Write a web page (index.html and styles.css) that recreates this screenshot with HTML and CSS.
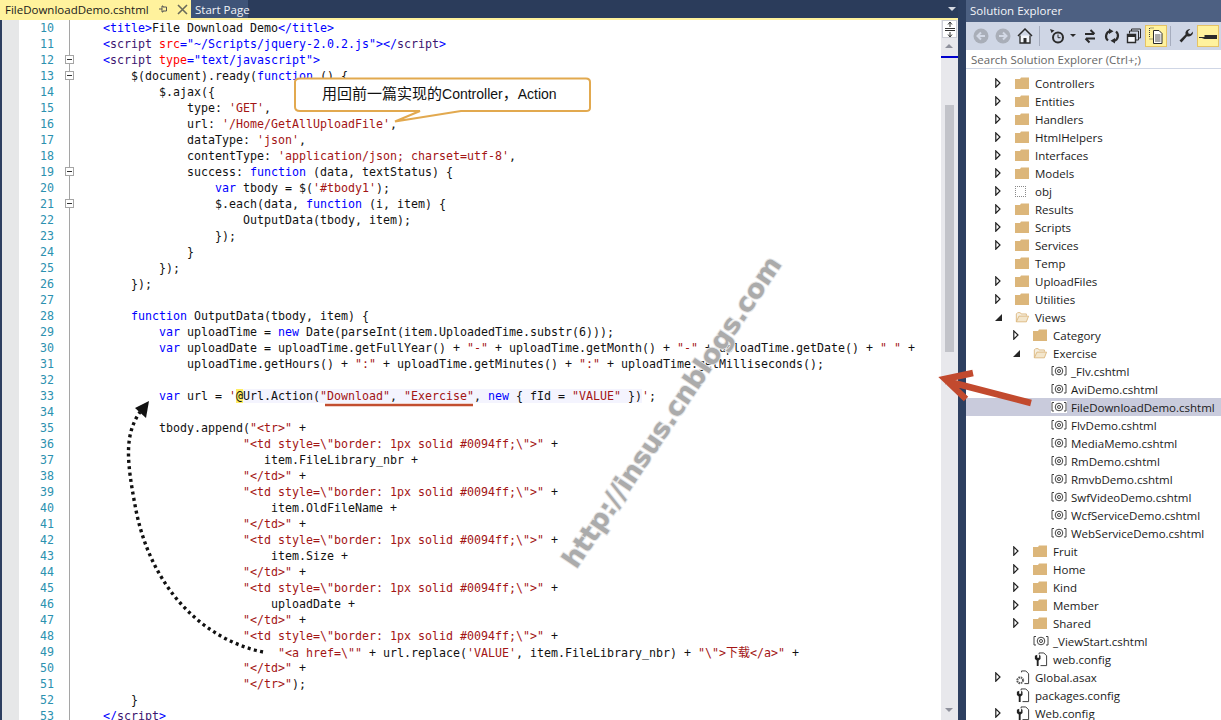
FILE: index.html
```html
<!DOCTYPE html>
<html lang="en">
<head>
<meta charset="utf-8">
<title>FileDownloadDemo.cshtml</title>
<link rel="stylesheet" href="styles.css">
</head>
<body>
<svg class="defs" aria-hidden="true">
  <symbol id="i-folder" viewBox="0 0 14 12"><path d="M0 2h5l1-1.500h8V12H0z" fill="#dcb67a"/></symbol>
  <symbol id="i-open" viewBox="0 0 16 12"><path d="M1.500 11.500V2.500L3 1h3l1 1.500h6v2" fill="#f6efe0" stroke="#dcb67a"/><path d="M1.500 11.500L4.500 5H15.500l-2.500 6.500z" fill="#f3e6cc" stroke="#dcb67a"/></symbol>
  <symbol id="i-closed" viewBox="0 0 6 10"><path d="M.8.800L5 5 .8 9.200z" fill="#fff" stroke="#1e1e1e" stroke-width="1.200"/></symbol>
  <symbol id="i-expanded" viewBox="0 0 7 7"><path d="M7 0v7H0z" fill="#262626"/></symbol>
  <symbol id="i-razor" viewBox="0 0 16 12"><path d="M3 1.500H1v8.500h2M13 1.500h2v8.500h-2" fill="none" stroke="#444"/><circle cx="8" cy="6" r="3.800" fill="none" stroke="#444"/><circle cx="8" cy="6" r="1.500" fill="none" stroke="#444"/></symbol>
  <symbol id="i-config" viewBox="0 0 16 16"><path d="M6.500 2.500V1h5l3 3v10.500H8" fill="#fff" stroke="#333"/><path d="M2 4v3.500L4 9v6h2V9l2-1.500V4L6.500 3v3h-2V3z" fill="#222"/></symbol>
  <symbol id="i-asax" viewBox="0 0 16 16"><path d="M7 2.500V1h4.500l3 3v10.500H10" fill="#fff" stroke="#333"/><circle cx="5.500" cy="11" r="3" fill="none" stroke="#555" stroke-width="2" stroke-dasharray="1.600 .8"/><circle cx="5.500" cy="11" r="3.800" fill="none" stroke="#777" stroke-width=".8" stroke-dasharray="1.300 1.700"/></symbol>
  <symbol id="i-back" viewBox="0 0 16 16"><circle cx="8" cy="8" r="7.500" fill="#a9aeb8"/><path d="M12 8H5M8 4.500L4.500 8 8 11.500" fill="none" stroke="#d3d9e6" stroke-width="2"/></symbol>
  <symbol id="i-forward" viewBox="0 0 16 16"><circle cx="8" cy="8" r="7.500" fill="#a9aeb8"/><path d="M4 8h7M8 4.500L11.500 8 8 11.500" fill="none" stroke="#d3d9e6" stroke-width="2"/></symbol>
  <symbol id="i-home" viewBox="0 0 16 16"><path d="M1 8l7-7 7 7" fill="none" stroke="#2b2b2b" stroke-width="1.500"/><path d="M3 7.500V15h10V7.500" fill="#f4f6fa" stroke="#2b2b2b" stroke-width="1.300"/><path d="M6.500 15v-5h3v5z" fill="#2b2b2b"/></symbol>
  <symbol id="i-history" viewBox="0 0 16 16"><path d="M1 1l4.500 1.500L2.500 5z" fill="#2b2b2b"/><circle cx="9" cy="9.500" r="5" fill="none" stroke="#2b2b2b" stroke-width="2"/><path d="M9 6.500v3.200h2.500" fill="none" stroke="#2b2b2b"/></symbol>
  <symbol id="i-sync" viewBox="0 0 16 16"><path d="M3 6h9M8.500 2l4 4" fill="none" stroke="#2b2b2b" stroke-width="2"/><path d="M13 10.500H4M7.500 14.500l-4-4" fill="none" stroke="#2b2b2b" stroke-width="2"/></symbol>
  <symbol id="i-refresh" viewBox="0 0 16 16"><path d="M4 12.500A5.500 5.500 0 0 1 6 3M12 3.500a5.500 5.500 0 0 1-2 9.500" fill="none" stroke="#2b2b2b" stroke-width="2.200"/><path d="M5 .5l4.500 2.700L5 6zM11 15.500L6.500 12.800 11 10z" fill="#2b2b2b"/></symbol>
  <symbol id="i-collapse" viewBox="0 0 16 16"><path d="M5.500 3.500V1h9v9h-2.500" fill="none" stroke="#2b2b2b"/><path d="M3.500 5.500V3h9v9h-2.500" fill="#cfd6e5" stroke="#2b2b2b"/><path d="M1.500 6.500h8v8h-8z" fill="#f4f6fa" stroke="#2b2b2b" stroke-width="1.400"/><path d="M2 8h7" stroke="#2b2b2b" stroke-width="2"/></symbol>
  <symbol id="i-showall" viewBox="0 0 16 18"><path d="M1.500 1v10" stroke="#444" stroke-dasharray="1 1"/><path d="M5.500 1h-4M4.500 12H1.500" stroke="#444" stroke-dasharray="1 1"/><path d="M5.500 3.500H11l3 3v10H5.500z" fill="#fff" stroke="#2b2b2b"/><path d="M7 8h5.500M7 10h5.500M7 12h5.500M7 14h5.500" stroke="#555"/></symbol>
  <symbol id="i-wrench" viewBox="0 0 16 16"><path d="M15 3.500a4.500 4.500 0 0 1-6 4.800L3.500 14.500 1.500 12.500l6-6a4.500 4.500 0 0 1 4.800-5.500L10 3.500l.5 2 2 .5z" fill="#2b2b2b"/></symbol>
  <symbol id="i-pin" viewBox="0 0 20 10"><path d="M1 6h5.500V4H19v4H6.500" fill="#2b2b2b"/><path d="M1 6.500h18" stroke="#2b2b2b"/></symbol>
  <symbol id="i-tabpin" viewBox="0 0 10 10"><path d="M1 5h3M4 2v6h1V7h3.500V3H5V2z" fill="none" stroke="#555"/></symbol>
  <symbol id="i-tabx" viewBox="0 0 11 11"><path d="M1 1l9 9M10 1l-9 9" stroke="#6b6b5a" stroke-width="1.600"/></symbol>
  <symbol id="i-split" viewBox="0 0 12 16"><path d="M1 7.500h10M1 9.500h10" stroke="#333"/><path d="M6 1v5M6 16v-5" stroke="#333"/><path d="M4 3.500L6 1l2 2.500M4 13.500L6 16l2-2.500" fill="none" stroke="#333"/></symbol>
</svg>

<div class="app">
  <main class="doc">
    <div class="tabs">
      <div class="tab tab-active"><span class="tab-name">FileDownloadDemo.cshtml</span><svg class="tab-pin"><use href="#i-tabpin"/></svg><svg class="tab-x"><use href="#i-tabx"/></svg></div>
      <div class="tab tab-other">Start Page</div>
      <div class="tab-fill"></div>
      <div class="tab-menu"></div>
    </div>
    <div class="tab-line"></div>
    <div class="editor">
      <div class="glyph-margin"></div>
      <div class="code">
<div class="ln"><span class="num">10</span><span class="fold"></span><span class="txt">    <b class="t">&lt;title&gt;</b>File Download Demo<b class="t">&lt;/title&gt;</b></span></div>
<div class="ln"><span class="num">11</span><span class="fold"></span><span class="txt">    <b class="t">&lt;</b><b class="m">script</b> <b class="a">src</b><b class="t">="~/Scripts/jquery-2.0.2.js"&gt;&lt;/</b><b class="m">script</b><b class="t">&gt;</b></span></div>
<div class="ln"><span class="num">12</span><span class="fold"><i class="box"></i></span><span class="txt">    <b class="t">&lt;</b><b class="m">script</b> <b class="a">type</b><b class="t">="text/javascript"&gt;</b></span></div>
<div class="ln"><span class="num">13</span><span class="fold"><i class="box"></i></span><span class="txt">        $(document).ready(<b class="t">function</b> () {</span></div>
<div class="ln"><span class="num">14</span><span class="fold"></span><span class="txt">            $.ajax({</span></div>
<div class="ln"><span class="num">15</span><span class="fold"></span><span class="txt">                type: <b class="s">'GET'</b>,</span></div>
<div class="ln"><span class="num">16</span><span class="fold"></span><span class="txt">                url: <b class="s">'/Home/GetAllUploadFile'</b>,</span></div>
<div class="ln"><span class="num">17</span><span class="fold"></span><span class="txt">                dataType: <b class="s">'json'</b>,</span></div>
<div class="ln"><span class="num">18</span><span class="fold"></span><span class="txt">                contentType: <b class="s">'application/json; charset=utf-8'</b>,</span></div>
<div class="ln"><span class="num">19</span><span class="fold"><i class="box"></i></span><span class="txt">                success: <b class="t">function</b> (data, textStatus) {</span></div>
<div class="ln"><span class="num">20</span><span class="fold"></span><span class="txt">                    <b class="t">var</b> tbody = $(<b class="s">'#tbody1'</b>);</span></div>
<div class="ln"><span class="num">21</span><span class="fold"><i class="box"></i></span><span class="txt">                    $.each(data, <b class="t">function</b> (i, item) {</span></div>
<div class="ln"><span class="num">22</span><span class="fold"></span><span class="txt">                        OutputData(tbody, item);</span></div>
<div class="ln"><span class="num">23</span><span class="fold"></span><span class="txt">                    });</span></div>
<div class="ln"><span class="num">24</span><span class="fold"></span><span class="txt">                }</span></div>
<div class="ln"><span class="num">25</span><span class="fold"></span><span class="txt">            });</span></div>
<div class="ln"><span class="num">26</span><span class="fold"></span><span class="txt">        });</span></div>
<div class="ln"><span class="num">27</span><span class="fold"></span><span class="txt"></span></div>
<div class="ln"><span class="num">28</span><span class="fold"></span><span class="txt">        <b class="t">function</b> OutputData(tbody, item) {</span></div>
<div class="ln"><span class="num">29</span><span class="fold"></span><span class="txt">            <b class="t">var</b> uploadTime = <b class="t">new</b> Date(parseInt(item.UploadedTime.substr(6)));</span></div>
<div class="ln"><span class="num">30</span><span class="fold"></span><span class="txt">            <b class="t">var</b> uploadDate = uploadTime.getFullYear() + <b class="s">"-"</b> + uploadTime.getMonth() + <b class="s">"-"</b> + uploadTime.getDate() + <b class="s">" "</b> +</span></div>
<div class="ln"><span class="num">31</span><span class="fold"></span><span class="txt">                uploadTime.getHours() + <b class="s">":"</b> + uploadTime.getMinutes() + <b class="s">":"</b> + uploadTime.getMilliseconds();</span></div>
<div class="ln"><span class="num">32</span><span class="fold"></span><span class="txt"></span></div>
<div class="ln"><span class="num">33</span><span class="fold"></span><span class="txt">            <b class="t">var</b> url = <b class="s">'</b><span class="razor"><b class="at">@</b>Url.Action(<b class="s">"Download"</b>, <b class="s">"Exercise"</b>, <b class="t">new</b> { fId = <b class="s">"VALUE"</b> })</span><b class="s">'</b>;</span></div>
<div class="ln"><span class="num">34</span><span class="fold"></span><span class="txt"></span></div>
<div class="ln"><span class="num">35</span><span class="fold"></span><span class="txt">            tbody.append(<b class="s">"&lt;tr&gt;"</b> +</span></div>
<div class="ln"><span class="num">36</span><span class="fold"></span><span class="txt">                        <b class="s">"&lt;td style=\"border: 1px solid #0094ff;\"&gt;"</b> +</span></div>
<div class="ln"><span class="num">37</span><span class="fold"></span><span class="txt">                           item.FileLibrary_nbr +</span></div>
<div class="ln"><span class="num">38</span><span class="fold"></span><span class="txt">                        <b class="s">"&lt;/td&gt;"</b> +</span></div>
<div class="ln"><span class="num">39</span><span class="fold"></span><span class="txt">                        <b class="s">"&lt;td style=\"border: 1px solid #0094ff;\"&gt;"</b> +</span></div>
<div class="ln"><span class="num">40</span><span class="fold"></span><span class="txt">                            item.OldFileName +</span></div>
<div class="ln"><span class="num">41</span><span class="fold"></span><span class="txt">                        <b class="s">"&lt;/td&gt;"</b> +</span></div>
<div class="ln"><span class="num">42</span><span class="fold"></span><span class="txt">                        <b class="s">"&lt;td style=\"border: 1px solid #0094ff;\"&gt;"</b> +</span></div>
<div class="ln"><span class="num">43</span><span class="fold"></span><span class="txt">                            item.Size +</span></div>
<div class="ln"><span class="num">44</span><span class="fold"></span><span class="txt">                        <b class="s">"&lt;/td&gt;"</b> +</span></div>
<div class="ln"><span class="num">45</span><span class="fold"></span><span class="txt">                        <b class="s">"&lt;td style=\"border: 1px solid #0094ff;\"&gt;"</b> +</span></div>
<div class="ln"><span class="num">46</span><span class="fold"></span><span class="txt">                            uploadDate +</span></div>
<div class="ln"><span class="num">47</span><span class="fold"></span><span class="txt">                        <b class="s">"&lt;/td&gt;"</b> +</span></div>
<div class="ln"><span class="num">48</span><span class="fold"></span><span class="txt">                        <b class="s">"&lt;td style=\"border: 1px solid #0094ff;\"&gt;"</b> +</span></div>
<div class="ln"><span class="num">49</span><span class="fold"></span><span class="txt">                             <b class="s">"&lt;a href=\""</b> + url.replace(<b class="s">'VALUE'</b>, item.FileLibrary_nbr) + <b class="s">"\"&gt;<span class="cjk">下载</span>&lt;/a&gt;"</b> +</span></div>
<div class="ln"><span class="num">50</span><span class="fold"></span><span class="txt">                        <b class="s">"&lt;/td&gt;"</b> +</span></div>
<div class="ln"><span class="num">51</span><span class="fold"></span><span class="txt">                        <b class="s">"&lt;/tr&gt;"</b>);</span></div>
<div class="ln"><span class="num">52</span><span class="fold"></span><span class="txt">        }</span></div>
<div class="ln"><span class="num">53</span><span class="fold"></span><span class="txt">    <b class="t">&lt;/</b><b class="m">script</b><b class="t">&gt;</b></span></div>
      </div>
      <div class="vscroll">
        <div class="split"><svg class="split-mark"><use href="#i-split"/></svg></div>
        <div class="arrow-up"></div>
        <div class="caret-mark"></div>
        <div class="thumb"></div>
        <div class="arrow-down"></div>
      </div>
    </div>
  </main>

  <aside class="panel">
    <div class="panel-title">Solution Explorer</div>
    <div class="toolbar">
      <span class="btn"><svg class="ic"><use href="#i-back"/></svg></span>
      <span class="btn"><svg class="ic"><use href="#i-forward"/></svg></span>
      <span class="btn"><svg class="ic"><use href="#i-home"/></svg></span>
      <span class="sep sep-a"></span>
      <span class="btn"><svg class="ic"><use href="#i-history"/></svg></span>
      <span class="drop"></span>
      <span class="btn"><svg class="ic"><use href="#i-sync"/></svg></span>
      <span class="btn"><svg class="ic"><use href="#i-refresh"/></svg></span>
      <span class="btn"><svg class="ic"><use href="#i-collapse"/></svg></span>
      <span class="btn btn-on"><svg class="ic ic-tall"><use href="#i-showall"/></svg></span>
      <span class="sep sep-b"></span>
      <span class="btn"><svg class="ic"><use href="#i-wrench"/></svg></span>
      <span class="btn btn-on"><svg class="ic-pin"><use href="#i-pin"/></svg></span>
    </div>
    <div class="search">Search Solution Explorer (Ctrl+;)</div>
    <div class="tree">
      <div class="row l1"><svg class="exp"><use href="#i-closed"/></svg><svg class="fi"><use href="#i-folder"/></svg>Controllers</div>
      <div class="row l1"><svg class="exp"><use href="#i-closed"/></svg><svg class="fi"><use href="#i-folder"/></svg>Entities</div>
      <div class="row l1"><svg class="exp"><use href="#i-closed"/></svg><svg class="fi"><use href="#i-folder"/></svg>Handlers</div>
      <div class="row l1"><svg class="exp"><use href="#i-closed"/></svg><svg class="fi"><use href="#i-folder"/></svg>HtmlHelpers</div>
      <div class="row l1"><svg class="exp"><use href="#i-closed"/></svg><svg class="fi"><use href="#i-folder"/></svg>Interfaces</div>
      <div class="row l1"><svg class="exp"><use href="#i-closed"/></svg><svg class="fi"><use href="#i-folder"/></svg>Models</div>
      <div class="row l1"><svg class="exp"><use href="#i-closed"/></svg><span class="fi fi-ghost"></span>obj</div>
      <div class="row l1"><svg class="exp"><use href="#i-closed"/></svg><svg class="fi"><use href="#i-folder"/></svg>Results</div>
      <div class="row l1"><svg class="exp"><use href="#i-closed"/></svg><svg class="fi"><use href="#i-folder"/></svg>Scripts</div>
      <div class="row l1"><svg class="exp"><use href="#i-closed"/></svg><svg class="fi"><use href="#i-folder"/></svg>Services</div>
      <div class="row l1"><span class="exp"></span><svg class="fi"><use href="#i-folder"/></svg>Temp</div>
      <div class="row l1"><svg class="exp"><use href="#i-closed"/></svg><svg class="fi"><use href="#i-folder"/></svg>UploadFiles</div>
      <div class="row l1"><svg class="exp"><use href="#i-closed"/></svg><svg class="fi"><use href="#i-folder"/></svg>Utilities</div>
      <div class="row l1"><svg class="exp exp-open"><use href="#i-expanded"/></svg><svg class="fi"><use href="#i-open"/></svg>Views</div>
      <div class="row l2"><svg class="exp"><use href="#i-closed"/></svg><svg class="fi"><use href="#i-folder"/></svg>Category</div>
      <div class="row l2"><svg class="exp exp-open"><use href="#i-expanded"/></svg><svg class="fi"><use href="#i-open"/></svg>Exercise</div>
      <div class="row l3"><svg class="fi fi-r"><use href="#i-razor"/></svg>_Flv.cshtml</div>
      <div class="row l3"><svg class="fi fi-r"><use href="#i-razor"/></svg>AviDemo.cshtml</div>
      <div class="row l3 selected"><svg class="fi fi-r"><use href="#i-razor"/></svg>FileDownloadDemo.cshtml</div>
      <div class="row l3"><svg class="fi fi-r"><use href="#i-razor"/></svg>FlvDemo.cshtml</div>
      <div class="row l3"><svg class="fi fi-r"><use href="#i-razor"/></svg>MediaMemo.cshtml</div>
      <div class="row l3"><svg class="fi fi-r"><use href="#i-razor"/></svg>RmDemo.cshtml</div>
      <div class="row l3"><svg class="fi fi-r"><use href="#i-razor"/></svg>RmvbDemo.cshtml</div>
      <div class="row l3"><svg class="fi fi-r"><use href="#i-razor"/></svg>SwfVideoDemo.cshtml</div>
      <div class="row l3"><svg class="fi fi-r"><use href="#i-razor"/></svg>WcfServiceDemo.cshtml</div>
      <div class="row l3"><svg class="fi fi-r"><use href="#i-razor"/></svg>WebServiceDemo.cshtml</div>
      <div class="row l2"><svg class="exp"><use href="#i-closed"/></svg><svg class="fi"><use href="#i-folder"/></svg>Fruit</div>
      <div class="row l2"><svg class="exp"><use href="#i-closed"/></svg><svg class="fi"><use href="#i-folder"/></svg>Home</div>
      <div class="row l2"><svg class="exp"><use href="#i-closed"/></svg><svg class="fi"><use href="#i-folder"/></svg>Kind</div>
      <div class="row l2"><svg class="exp"><use href="#i-closed"/></svg><svg class="fi"><use href="#i-folder"/></svg>Member</div>
      <div class="row l2"><svg class="exp"><use href="#i-closed"/></svg><svg class="fi"><use href="#i-folder"/></svg>Shared</div>
      <div class="row l2"><span class="exp"></span><svg class="fi fi-r"><use href="#i-razor"/></svg>_ViewStart.cshtml</div>
      <div class="row l2"><span class="exp"></span><svg class="fi fi-c"><use href="#i-config"/></svg>web.config</div>
      <div class="row l1"><svg class="exp"><use href="#i-closed"/></svg><svg class="fi fi-c"><use href="#i-asax"/></svg>Global.asax</div>
      <div class="row l1"><span class="exp"></span><svg class="fi fi-c"><use href="#i-config"/></svg>packages.config</div>
      <div class="row l1"><svg class="exp"><use href="#i-closed"/></svg><svg class="fi fi-c"><use href="#i-config"/></svg>Web.config</div>
    </div>
  </aside>

  <svg class="overlay" viewBox="0 0 1221 720" aria-hidden="false">
    <defs>
      <filter id="soft" x="-10%" y="-200%" width="120%" height="500%"><feGaussianBlur stdDeviation="1.500"/></filter>
    </defs>
    <path class="callout" d="M300 78.500 H586 Q590 78.500 590 82 V108 Q590 111 586 111 H461 L395 121.500 L420 111 H300 Q295 111 295 107 V82 Q295 78.500 300 78.500Z"/>
    <text class="callout-text" x="322" y="99"><tspan class="callout-cjk">用回前一篇实现的</tspan>Controller<tspan class="callout-cjk">，</tspan>Action</text>
    <path class="mark-shadow" d="M330 410.500H476" filter="url(#soft)"/>
    <path class="mark-line" d="M325 405H473"/>
    <path class="dots" d="M263 652C205 640 150 590 135 505C127 462 124 435 140 412"/>
    <path class="dots-head" d="M149 401L146 418 135 408z"/>
    <path class="red-arrow" d="M1031 403L946 381M973 373L945 379 966 399"/>
    <text class="wm-back" transform="translate(672 412) rotate(-56)" text-anchor="middle" y="9">http://insus.cnblogs.com</text>
    <text class="wm" transform="translate(672 412) rotate(-56)" text-anchor="middle" y="9">http://insus.cnblogs.com</text>
  </svg>
</div>
</body>
</html>
```

FILE: styles.css
```css
* { box-sizing: border-box; }
html, body { margin: 0; padding: 0; }
body { width: 1221px; height: 720px; overflow: hidden; background: #2d3f60; }
.defs { position: absolute; width: 0; height: 0; }

.app {
  position: relative;
  display: flex;
  width: 1221px;
  height: 720px;
  overflow: hidden;
  background: #2d3f60;
  font-family: "Open Sans", "Liberation Sans", sans-serif;
  font-size: 11.5px;
}

/* Document well */
.doc { width: 958px; height: 720px; display: flex; flex-direction: column; flex: none; }
.tabs { display: flex; height: 18px; flex: none; background: #2b3c5b; }
.tab { display: flex; align-items: center; height: 18px; white-space: nowrap; }
.tab-active { width: 191px; padding-left: 5px; background: #fff29d; color: #1a1a1a; }
.tab-name { width: 150px; }
.tab-pin { width: 10px; height: 10px; margin: 0 9px 0 3px; }
.tab-x { width: 11px; height: 11px; }
.tab-other { width: 57px; padding-left: 4px; background: #3f5478; color: #f2f4f8; }
.tab-fill { flex: 1; }
.tab-menu {
  width: 0; height: 0; margin: 7px 2px 0 0;
  border-left: 4px solid transparent; border-right: 4px solid transparent;
  border-top: 4px solid #d5d9e2;
}
.tab-line { height: 2px; flex: none; background: #fff29d; }

.editor { flex: 1; display: flex; min-height: 0; padding-left: 2px; background: #2d3f60; }
.glyph-margin { width: 17px; flex: none; background: #e6e7e8; }
.code {
  width: 922px;
  flex: none;
  background: #fff;
  overflow: hidden;
  font-family: "DejaVu Sans Mono", "Liberation Mono", monospace;
  font-size: 11.63px;
  color: #111;
}
.ln { display: flex; height: 16px; line-height: 16px; }
.num { width: 35px; flex: none; text-align: right; color: #2b91af; }
.fold { position: relative; width: 21px; flex: none; }
.fold::before { content: ""; position: absolute; left: 15px; top: 0; bottom: 0; width: 1px; background: #a5a5a5; }
.box { position: absolute; left: 11px; top: 3px; width: 9px; height: 9px; background: #fff; border: 1px solid #a5a5a5; }
.box::after { content: ""; position: absolute; left: 1px; top: 3px; width: 5px; height: 1px; background: #333; }
.txt { white-space: pre; flex: 1; }
.txt b { font-weight: normal; }
.t { color: #0000ff; }
.m { color: #3b1570; }
.a { color: #ff0000; }
.s { color: #a31515; }
.at { background: #ffee62; color: #111; }
.razor { background: #f4f4fe; }
.cjk { font-family: "Noto Sans CJK SC", sans-serif; font-size: 12px; }

.vscroll { position: relative; width: 17px; flex: none; background: #e8e8ec; }
.split { height: 18px; background: #fff; border: 1px solid #ccced6; margin: 0 1px; display: flex; align-items: center; justify-content: center; }
.split-mark { width: 12px; height: 16px; }
.arrow-up { width: 0; height: 0; margin: 6px 0 0 4px; border-left: 4px solid transparent; border-right: 4px solid transparent; border-bottom: 4px solid #8f919c; }
.caret-mark { height: 2px; margin-top: 8px; background: #0000cd; }
.thumb { width: 9px; height: 247px; margin: 47px 0 0 4px; background: #c2c3c9; }
.arrow-down { position: absolute; left: 4px; bottom: 8px; width: 0; height: 0; border-left: 4px solid transparent; border-right: 4px solid transparent; border-top: 4px solid #8f919c; }

/* Solution Explorer */
.panel { width: 255px; height: 720px; margin-left: 8px; flex: none; display: flex; flex-direction: column; background: #fff; }
.panel-title { height: 22px; flex: none; line-height: 22px; padding-left: 4px; background: #4d6082; color: #f4f6fa; white-space: nowrap; }
.toolbar { height: 28px; flex: none; display: flex; align-items: center; padding-left: 4px; background: #cfd6e5; }
.btn { width: 22px; height: 22px; flex: none; display: flex; align-items: center; justify-content: center; }
.btn-on { background: #fff29d; border: 1px solid #e5c365; }
.ic { width: 16px; height: 16px; }
.ic-tall { height: 18px; }
.ic-pin { width: 20px; height: 10px; }
.sep { width: 1px; height: 20px; flex: none; background: #a6adbe; }
.sep-a { margin: 0 6px 0 3px; }
.sep-b { margin: 0 4px 0 3px; }
.drop { width: 11px; height: 22px; flex: none; position: relative; }
.drop::after { content: ""; position: absolute; left: 2px; top: 9px; border-left: 3px solid transparent; border-right: 3px solid transparent; border-top: 3px solid #2b2b2b; }
.search { height: 19px; flex: none; line-height: 19px; padding-left: 5px; border-bottom: 1px solid #cfd6e5; color: #666; background: #fff; white-space: nowrap; }

.tree { flex: 1; padding-top: 5px; overflow: hidden; background: #fff; color: #1a1a1a; }
.row { display: flex; align-items: center; height: 18px; white-space: nowrap; }
.l1 { padding-left: 29px; }
.l2 { padding-left: 47px; }
.l3 { padding-left: 85px; }
.selected { background: #c9cbdc; }
.exp { width: 6px; height: 10px; flex: none; margin-right: 14px; }
.exp-open { width: 7px; height: 7px; margin-right: 13px; }
.fi { width: 14px; height: 12px; flex: none; margin-right: 6px; }
.l1 .fi-c, .l2 .fi-c { width: 15px; height: 15px; margin-right: 5px; }
.fi-r { width: 16px; height: 12px; margin-right: 4px; }
.selected .fi-r { background: #fff; }
.fi-ghost { border: 1px dotted #8a8a8a; height: 11px; width: 11px; margin: 0 9px 0 0; }

/* Annotations drawn over the screenshot */
.overlay { position: absolute; left: 0; top: 0; width: 1221px; height: 720px; pointer-events: none; }
.callout { fill: #fff; stroke: #e2a94f; stroke-width: 2; }
.callout-text { font-family: "Liberation Sans", "Noto Sans CJK SC", sans-serif; font-size: 14px; fill: #111; }
.callout-cjk { font-family: "Noto Sans CJK SC", sans-serif; font-size: 15px; }
.mark-line { stroke: #c24e30; stroke-width: 2.500; fill: none; }
.mark-shadow { stroke: #9a9a9a; stroke-width: 3; fill: none; }
.dots { fill: none; stroke: #111; stroke-width: 3.400; stroke-dasharray: 3 3.400; }
.dots-head { fill: #111; }
.red-arrow { fill: none; stroke: #c24a2e; stroke-width: 6.500; }
.wm, .wm-back { font-family: "DejaVu Sans", sans-serif; font-weight: bold; font-size: 26.500px; }
.wm { fill: #ababab; }
.wm-back { fill: none; stroke: #e6e6e6; stroke-width: 2; }
```
